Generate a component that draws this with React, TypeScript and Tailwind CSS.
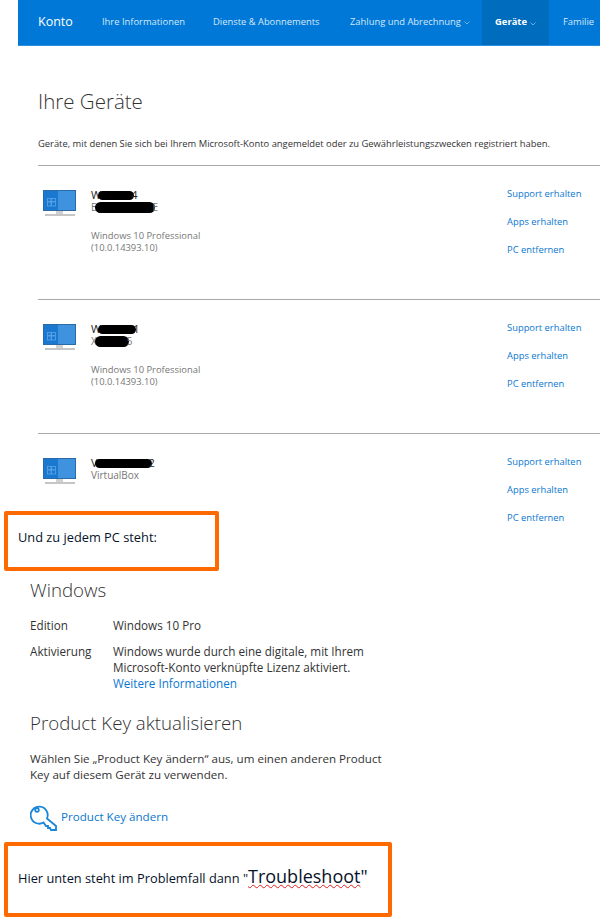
import React from "react";

function Monitor() {
  return (
    <svg width="34" height="28" viewBox="0 0 34 28" className="shrink-0">
      <rect x="0.5" y="0.5" width="32" height="20" fill="#3f92de" stroke="#2a6aa6" />
      <rect x="1" y="1" width="14" height="19" fill="#1a78d0" />
      <rect x="4.5" y="8.5" width="3.5" height="3" fill="none" stroke="#5aa5e6" strokeWidth="0.8" />
      <rect x="8.5" y="8.5" width="4" height="3" fill="none" stroke="#5aa5e6" strokeWidth="0.8" />
      <rect x="4.5" y="12" width="3.5" height="4" fill="none" stroke="#5aa5e6" strokeWidth="0.8" />
      <rect x="8.5" y="12" width="4" height="4" fill="none" stroke="#5aa5e6" strokeWidth="0.8" />
      <rect x="13" y="21" width="7" height="3" fill="#d0d0d0" />
      <rect x="2" y="24" width="30" height="2" fill="#c6c6c6" />
    </svg>
  );
}

function Chevron({ color }: { color: string }) {
  return (
    <svg width="6" height="4" viewBox="0 0 6 4" className="ml-[3px] mt-[2px] inline-block" fill="none" stroke={color} strokeWidth="0.7">
      <path d="M0.5 0.5 L3 3 L5.5 0.5" />
    </svg>
  );
}

function Device({
  name,
  sub,
  os,
  height,
}: {
  name: [string, number, string];
  sub: [string, number, string];
  os: boolean;
  height: string;
}) {
  return (
    <div className={`ml-[38px] flex border-t border-[#a8a8a8] ${height}`}>
      <div className="ml-[5px] mt-[24px]">
        <Monitor />
      </div>
      <div className="ml-[14px] mt-[23px] w-[300px] whitespace-nowrap text-[9.4px] leading-[12px] text-[#777]">
        <div className="flex h-[12px] items-center text-[11px] text-[#222]">
          <span>{name[0]}</span>
          <span className="mx-[-3px] h-[9px] rounded-full bg-black" style={{ width: name[1] }} />
          <span>{name[2]}</span>
        </div>
        <div className="flex h-[12px] items-center text-[10px]">
          <span>{sub[0]}</span>
          {sub[1] > 0 && <span className="mx-[-2px] h-[11px] rounded-full bg-black" style={{ width: sub[1] }} />}
          <span>{sub[2]}</span>
        </div>
        {os && (
          <div className="mt-[17px]">
            <div>Windows 10 Professional</div>
            <div>(10.0.14393.10)</div>
          </div>
        )}
      </div>
      <div className="ml-auto mt-[21px] flex w-[93px] shrink-0 flex-col gap-[14px] text-[9.4px] leading-[14px] text-[#0b78d0]">
        <span>Support erhalten</span>
        <span>Apps erhalten</span>
        <span>PC entfernen</span>
      </div>
    </div>
  );
}

function Callout({ className, children }: { className: string; children: React.ReactNode }) {
  return (
    <div
      className={`flex items-center whitespace-nowrap rounded-[2px] border-[4px] border-[#ff6a00] bg-white pb-[6px] pl-[10px] text-[#06122a] ${className}`}
    >
      {children}
    </div>
  );
}

export default function App() {
  return (
    <div className="h-[924px] w-[600px] overflow-hidden bg-white font-['Open_Sans','Noto_Sans',sans-serif]">
      <nav className="ml-[18px] flex h-[46px] items-center whitespace-nowrap border-b border-[#2f8fdf] bg-[#0078d7] text-[9.4px] text-[#d4e8f8]">
        <span className="ml-[20px] w-[64px] text-[12.5px] text-white">Konto</span>
        <span className="w-[111px]">Ihre Informationen</span>
        <span className="w-[137px]">Dienste &amp; Abonnements</span>
        <span className="flex w-[132px] items-center">
          Zahlung und Abrechnung
          <Chevron color="#9cc8ee" />
        </span>
        <span className="flex h-full w-[67px] items-center justify-center bg-[#006cbe] font-bold text-white">
          Geräte
          <Chevron color="#9cc8ee" />
        </span>
        <span className="ml-[14px]">Familie</span>
      </nav>

      <h1 className="ml-[38px] mt-[42px] text-[20.5px] font-light leading-[26px] text-[#333]">Ihre Geräte</h1>
      <p className="ml-[38px] mt-[23px] whitespace-nowrap text-[9.4px] leading-[14px] text-[#333]">
        Geräte, mit denen Sie sich bei Ihrem Microsoft-Konto angemeldet oder zu Gewährleistungszwecken registriert
        haben.
      </p>

      <div className="relative mt-[14px]">
        <Device height="h-[134px]" os name={["W", 36, "4"]} sub={["E", 60, "E"]} />
        <Device height="h-[134px]" os name={["W", 38, "1"]} sub={["X", 34, "5"]} />
        <Device height="h-[144px]" name={["V", 57, "2"]} sub={["VirtualBox", 0, ""]} os={false} />
        <Callout className="absolute left-[4px] top-[346px] h-[60px] w-[215px] text-[12.8px]">
          Und zu jedem PC steht:
        </Callout>
      </div>

      <section className="ml-[30px] w-[380px] whitespace-nowrap text-[#333]">
        <h2 className="text-[18.7px] font-light leading-[26px]">Windows</h2>
        <div className="mt-[14px] flex text-[11.7px] leading-[16px]">
          <span className="w-[83px]">Edition</span>
          <span>Windows 10 Pro</span>
        </div>
        <div className="mt-[10px] flex text-[11.7px] leading-[16px]">
          <span className="w-[83px] shrink-0">Aktivierung</span>
          <div>
            <div>Windows wurde durch eine digitale, mit Ihrem</div>
            <div>Microsoft-Konto verknüpfte Lizenz aktiviert.</div>
            <div className="text-[#0b78d0]">Weitere Informationen</div>
          </div>
        </div>
        <h2 className="mt-[19px] text-[18.7px] font-light leading-[26px]">Product Key aktualisieren</h2>
        <p className="mt-[15px] text-[11.6px] leading-[16px]">
          Wählen Sie „Product Key ändern“ aus, um einen anderen Product
          <br />
          Key auf diesem Gerät zu verwenden.
        </p>
        <div className="mt-[20px] flex items-center gap-[3px] text-[11.6px] text-[#0b78d0]">
          <svg width="28" height="28" viewBox="0 0 28 28" fill="none" stroke="#1a86d8" strokeWidth="1.8">
            <path d="M17 15.5 L26 23 V27 H21 L20 25 H18 V23 H16 L13.5 19.5 A8.5 8.5 0 1 1 17 15.5 Z" />
            <circle cx="7" cy="7" r="1.8" />
          </svg>
          <span>Product Key ändern</span>
        </div>
      </section>

      <Callout className="ml-[4px] mt-[11px] h-[75px] w-[388px] text-[12.8px]">
        <span>
          Hier unten steht im Problemfall dann "
          <span className="text-[18px] underline decoration-[#e02020] decoration-wavy decoration-1">Troubleshoot</span>
          <span className="text-[18px]">"</span>
        </span>
      </Callout>
    </div>
  );
}
